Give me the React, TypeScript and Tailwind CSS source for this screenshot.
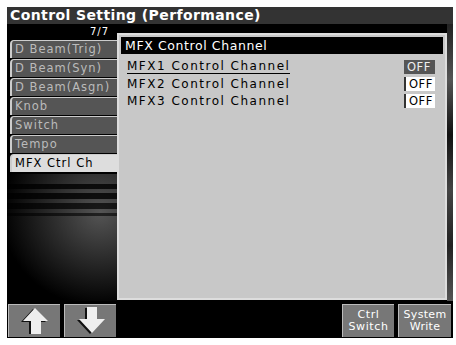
import React from 'react';

const tabs = ['D Beam(Trig)', 'D Beam(Syn)', 'D Beam(Asgn)', 'Knob', 'Switch', 'Tempo', 'MFX Ctrl Ch'];

const rows = [
  { label: 'MFX1 Control Channel', value: 'OFF', active: true },
  { label: 'MFX2 Control Channel', value: 'OFF', active: false },
  { label: 'MFX3 Control Channel', value: 'OFF', active: false },
];

function UpArrow() {
  return (
    <svg width="32" height="28" viewBox="0 0 32 28">
      <path d="M14 2 L27 15 L20 15 L20 27 L10 27 L10 15 L2 15 Z" fill="#111" />
      <path d="M16 1 L29 14 L22 14 L22 27 L12 27 L12 14 L4 14 Z" fill="#eee" />
    </svg>
  );
}

function DownArrow() {
  return (
    <svg width="32" height="28" viewBox="0 0 32 28">
      <path d="M10 1 L20 1 L20 13 L28 13 L15 27 L2 13 L10 13 Z" fill="#111" />
      <path d="M12 0 L22 0 L22 12 L30 12 L17 26 L4 12 L12 12 Z" fill="#eee" />
    </svg>
  );
}

export default function App() {
  const font = { fontFamily: '"DejaVu Sans", "Liberation Sans", sans-serif' };
  return (
    <div className="w-[456px] h-[345px] bg-white pt-[7px] pl-[7px] pr-[3px] pb-[7px]" style={font}>
      <div className="w-full h-full bg-black flex flex-col">
        {/* title */}
        <div className="h-[17px] bg-[#333] text-white font-bold text-[14px] leading-[17px] pl-[3px] tracking-[0.4px]">
          Control Setting (Performance)
        </div>

        <div className="flex flex-1 min-h-0">
          {/* left */}
          <div className="w-[110px] flex flex-col bg-black">
            <div className="h-[15px] text-right text-white text-[10px] leading-[15px] pr-[8px] tracking-[1px]">7/7</div>
            <div className="flex flex-col gap-[1px] pl-[3px] pt-[1px]">
              {tabs.map((t, i) => {
                const sel = i === tabs.length - 1;
                return (
                  <div
                    key={t}
                    className={`h-[18px] border-l-2 border-t border-[#ccc] rounded-tl-[4px] pl-[3px] text-[11.5px] leading-[17px] tracking-[1px] whitespace-nowrap overflow-hidden ${
                      sel ? 'bg-[#ddd] text-black w-[110px]' : 'bg-[#555] text-[#bbb] w-[108px]'
                    }`}
                  >
                    {t}
                  </div>
                );
              })}
            </div>
            <div className="flex-1 mt-[2px] flex flex-col gap-[4px] pt-[10px] bg-[radial-gradient(ellipse_at_85%_30%,#555_0%,#222_45%,#000_75%)]">
              <div className="h-[5px] bg-black/80" />
              <div className="h-[6px] bg-black/80" />
              <div className="h-[6px] bg-black/70" />
              <div className="h-[3px] bg-black/60" />
            </div>
          </div>

          {/* dialog */}
          <div className="flex-1 flex flex-col pt-[9px] pb-[1px]">
            <div className="flex-1 border-2 border-[#ddd] p-[2px] bg-[#c8c8c8] flex flex-col">
              <div className="h-[17px] bg-black text-white text-[12.5px] leading-[17px] pl-[4px] tracking-[0.6px]">
                MFX Control Channel
              </div>
              <div className="flex flex-col gap-[3px] pt-[6px] pl-[6px] pr-[8px]">
                {rows.map((r) => (
                  <div key={r.label} className="flex items-center justify-between h-[14px]">
                    <span
                      className={`text-[12px] leading-[13px] text-black tracking-[1.5px] ${
                        r.active ? 'border-b border-black' : ''
                      }`}
                    >
                      {r.label}
                    </span>
                    <span
                      className={`w-[31px] h-[14px] text-[11.5px] leading-[14px] pl-[3px] tracking-[0.5px] ${
                        r.active ? 'bg-[#555] text-[#eee]' : 'bg-white text-black border-l-2 border-[#333]'
                      }`}
                    >
                      {r.value}
                    </span>
                  </div>
                ))}
              </div>
            </div>
          </div>

          {/* right strip */}
          <div className="w-[6px] bg-[linear-gradient(to_bottom,#222,#555_20%,#111_40%,#444_60%,#222_80%,#555)]" />
        </div>

        {/* bottom */}
        <div className="h-[37px] flex items-end gap-[4px] pb-[1px] pl-[1px] pr-[2px]">
          <div className="w-[52px] h-[33px] bg-[#777] border-t border-l border-[#bbb] flex items-center justify-center">
            <UpArrow />
          </div>
          <div className="w-[52px] h-[33px] bg-[#777] border-t border-l border-[#bbb] flex items-center justify-center">
            <DownArrow />
          </div>
          <div className="flex-1" />
          <div className="w-[52px] h-[33px] bg-[#777] border-t border-l border-[#bbb] flex flex-col items-center justify-center text-white text-[11px] leading-[12px] tracking-[0.6px]">
            <span>Ctrl</span>
            <span>Switch</span>
          </div>
          <div className="w-[53px] h-[33px] bg-[#777] border-t border-l border-[#bbb] flex flex-col items-center justify-center text-white text-[11px] leading-[12px] tracking-[0.3px]">
            <span>System</span>
            <span>Write</span>
          </div>
        </div>
      </div>
    </div>
  );
}
